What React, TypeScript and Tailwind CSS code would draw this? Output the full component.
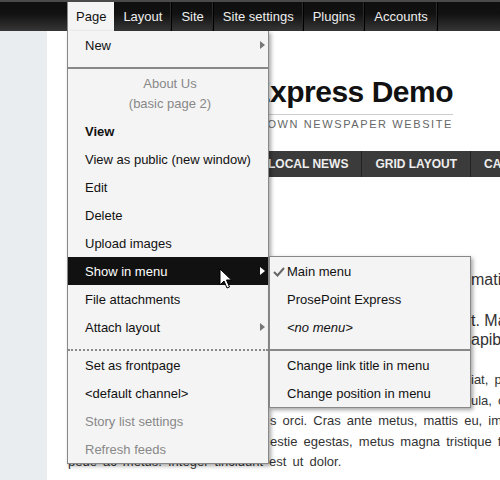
import React from "react";

function Arrow({ white }: { white?: boolean }) {
  return (
    <span
      className={
        "absolute right-[3px] top-[10px] w-0 h-0 border-y-[4px] border-y-transparent border-l-[5px] " +
        (white ? "border-l-white" : "border-l-[#777]")
      }
    />
  );
}

const row = "relative h-[28px] leading-[28px] pt-[1px] pl-[17px] pr-[8px] whitespace-nowrap";

export default function App() {
  return (
    <div className="relative w-[500px] h-[480px] overflow-hidden bg-white font-['Liberation_Sans',Arial,sans-serif] text-[13px] text-[#111]">
      {/* top admin bar */}
      <div className="h-[31px] border-t-2 border-[#4a4a4a] bg-[linear-gradient(#0f0f0f_0%,#111_40%,#363636_100%)] flex">
        <div className="ml-[67px] flex h-[29px] text-[13px] leading-[29px] text-[#eee]">
          <div className="bg-[#f4f4f4] text-[#111] border-l border-[#888] px-[8px]">Page</div>
          <div className="px-[9px] border-r border-black shadow-[inset_-1px_0_0_#2a2a2a]">Layout</div>
          <div className="px-[9px] border-r border-black shadow-[inset_-1px_0_0_#2a2a2a]">Site</div>
          <div className="px-[9px] border-r border-black shadow-[inset_-1px_0_0_#2a2a2a]">Site settings</div>
          <div className="px-[9px] border-r border-black shadow-[inset_-1px_0_0_#2a2a2a]">Plugins</div>
          <div className="px-[9px] border-r border-black shadow-[inset_-1px_0_0_#2a2a2a]">Accounts</div>
        </div>
      </div>

      {/* page body */}
      <div className="flex h-[449px]">
        <div className="w-[47px] shrink-0 bg-[#e9edf0]" />
        <div className="flex-1 pl-[21px] overflow-hidden">
          <div className="w-[385px] mt-[45px]">
            <div className="text-right text-[30px] leading-[32px] font-bold tracking-[-0.5px] text-[#111] whitespace-nowrap pb-[6px] border-b border-[#ccc]">
              ProsePoint Express Demo
            </div>
            <div className="mt-[2px] text-right text-[11px] leading-[14px] tracking-[1.6px] text-[#666] whitespace-nowrap">
              YOUR HOMETOWN NEWSPAPER WEBSITE
            </div>
          </div>
          <div className="mt-[20px] h-[26px] bg-[#3b3b3b] flex text-[12px] leading-[26px] font-bold text-[#eee] whitespace-nowrap w-[600px]">
            <div className="w-[187px] pl-[13px] border-r border-[#222]">HOME</div>
            <div className="px-[13px] border-r border-[#222]">LOCAL NEWS</div>
            <div className="px-[13px] border-r border-[#222]">GRID LAYOUT</div>
            <div className="px-[13px]">CATEGORIES</div>
          </div>

          <div className="mt-[93px] text-[16px] leading-[20px] text-[#333] whitespace-nowrap pl-[403px]">mation about ProsePoint</div>
          <div className="mt-[21px] text-[16px] leading-[19px] text-[#333] whitespace-nowrap">
            <div className="pl-[403px]">t. Maecenas</div>
            <div className="pl-[403px]">apibus lorem</div>
          </div>
          <div className="mt-[21px] text-[13px] leading-[20.5px] text-[#333] whitespace-nowrap [word-spacing:2.5px]">
            <div className="pl-[403px]">iat, pellentesque</div>
            <div className="pl-[403px]">ula, consequat</div>
            <div className="pl-[202px]">s orci. Cras ante metus, mattis eu, imperdiet</div>
            <div className="pl-[202px]">estie egestas, metus magna tristique fermentum</div>
            <div>pede ac metus. Integer tincidunt est ut dolor.</div>
          </div>
        </div>
      </div>

      {/* Page dropdown menu */}
      <div className="absolute left-[67px] top-[31px] w-[202px] bg-[#f4f4f4] border-x border-b border-[#888] shadow-[2px_2px_4px_rgba(0,0,0,0.35)]">
        <div className="pb-[8px]">
          <div className={row}>
            New
            <Arrow />
          </div>
        </div>
        <div className="border-t-2 border-[#888] pb-[8px]">
          <div className="pt-[5px] pb-[3px] pl-[4px] text-center text-[#888] leading-[20px]">
            <div>About Us</div>
            <div>(basic page 2)</div>
          </div>
          <div className={row + " font-bold"}>View</div>
          <div className={row}>View as public (new window)</div>
          <div className={row}>Edit</div>
          <div className={row}>Delete</div>
          <div className={row}>Upload images</div>
          <div className={row + " bg-[#111] text-white"}>
            Show in menu
            <Arrow white />
          </div>
          <div className={row}>File attachments</div>
          <div className={row}>
            Attach layout
            <Arrow />
          </div>
        </div>
        <div className="border-t-2 border-dotted border-[#888]">
          <div className={row}>Set as frontpage</div>
          <div className={row}>&lt;default channel&gt;</div>
          <div className={row + " text-[#888]"}>Story list settings</div>
          <div className={row + " text-[#888]"}>Refresh feeds</div>
        </div>
      </div>

      {/* Show in menu submenu */}
      <div className="absolute left-[269px] top-[256px] w-[202px] bg-[#f4f4f4] border border-[#888] shadow-[2px_2px_4px_rgba(0,0,0,0.35)]">
        <div className="pb-[8px]">
          <div className={row}>
            <svg className="absolute left-[3px] top-[10px]" width="12" height="10" viewBox="0 0 12 10">
              <polyline points="1,5 4.5,8.5 11,1" fill="none" stroke="#666" strokeWidth="2" />
            </svg>
            Main menu
          </div>
          <div className={row}>ProsePoint Express</div>
          <div className={row + " italic"}>&lt;no menu&gt;</div>
        </div>
        <div className="border-t-2 border-[#888]">
          <div className={row}>Change link title in menu</div>
          <div className={row}>Change position in menu</div>
        </div>
      </div>

      {/* mouse cursor */}
      <svg className="absolute left-[219px] top-[268px]" width="14" height="22" viewBox="0 0 14 22">
        <path d="M1 1 L1 17 L5 13 L8 20 L10.5 19 L7.5 12 L12.5 12 Z" fill="white" stroke="black" strokeWidth="1" strokeLinejoin="round" />
      </svg>
    </div>
  );
}
